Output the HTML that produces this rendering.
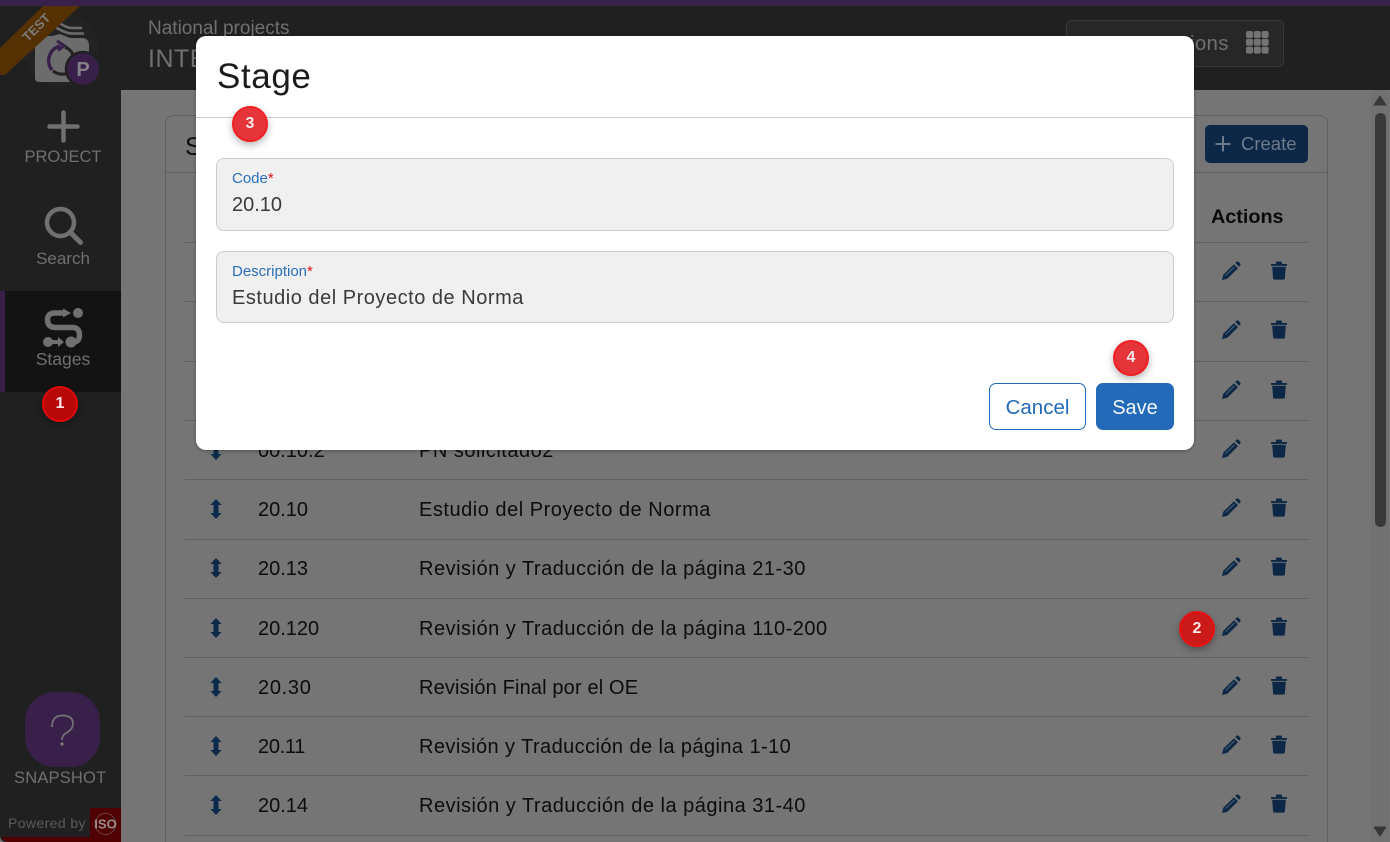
<!DOCTYPE html>
<html><head><meta charset="utf-8">
<style>
html,body{margin:0;padding:0;width:1390px;height:842px;overflow:hidden;background:#757575;font-family:"Liberation Sans",sans-serif}
#w{position:relative;width:1390px;height:842px;overflow:hidden;background:#757575}
.a{position:absolute}
.t{position:absolute;white-space:nowrap;line-height:24px;height:24px}
.line{position:absolute;left:185px;width:1123px;height:1px;background:#5f5f5f}
.c{color:#0c0c0c;font-size:20px;left:258px}
.d{color:#0c0c0c;font-size:20px;left:419px;letter-spacing:.5px}
.side{color:#707070;text-align:center;left:0;width:126px}
.b{position:absolute;width:32px;height:32px;border-radius:50%;border:2.5px solid #f01f22;background:#e5343a;color:#fbe9e9;font-weight:700;font-size:16px;line-height:32px;text-align:center;box-shadow:0 3px 8px rgba(0,0,0,.3)}
</style></head>
<body>
<div id="w">
<svg width="0" height="0" style="position:absolute"><defs>
<g id="pen"><path d="M1 19l1.300-5.200L13 3.200l4 4L6.200 17.900z" fill="#0c2846"/><path d="M4.500 14.700L13.500 5.800" stroke="#566578" stroke-width="1" fill="none"/><path d="M14.300 1.900l1-1c.8-.7 1.600-.7 2.300 0l1.500 1.500c.7.7.7 1.500 0 2.300l-1 1z" fill="#0c2846"/></g>
<g id="tr"><path d="M0 3h16v1.900H0z M5 3V1.500Q5 .5 6 .5h4q1 0 1 1V3z" fill="#0c2846"/><path d="M1.200 5.800h13.600l-.9 11.600q-.1 1.200-1.300 1.200H3.400q-1.200 0-1.300-1.200z" fill="#0c2846"/></g>
<g id="ar"><path d="M6 0l5.600 6H8.500v8h3.100L6 20 .4 14h3.100V6H.4z" fill="#0c2a4a"/></g>
</defs></svg>

<!-- page chrome -->
<div class="a" style="left:0;top:0;width:1390px;height:6px;background:#38204a"></div>
<div class="a" style="left:0;top:6px;width:1390px;height:84px;background:#202020"></div>
<div class="a" style="left:0;top:6px;width:121px;height:836px;background:#202020;border-bottom-left-radius:6px"></div>
<div class="a" style="left:0;top:291px;width:121px;height:101px;background:#131313"></div>
<div class="a" style="left:0;top:291px;width:5px;height:101px;background:#38204a"></div>

<!-- header -->
<div class="t" style="left:148px;top:17px;font-size:19px;color:#707070">National projects</div>
<div class="t" style="left:148px;top:47px;font-size:25px;color:#707070;letter-spacing:.5px">INTE</div>
<div class="a" style="left:1066px;top:20px;width:216px;height:45px;border:1px solid #383838;border-radius:5px;background:#272727"></div>
<div class="t" style="left:1190px;top:32px;font-size:20.500px;color:#707070;letter-spacing:.3px">ions</div>
<svg class="a" style="left:1246px;top:31px" width="23" height="23"><g fill="#747474"><rect x="0" y="0" width="7" height="7" rx="2"/><rect x="7.800" y="0" width="7" height="7" rx="2"/><rect x="15.600" y="0" width="7" height="7" rx="2"/><rect x="0" y="7.800" width="7" height="7" rx="2"/><rect x="7.800" y="7.800" width="7" height="7" rx="2"/><rect x="15.600" y="7.800" width="7" height="7" rx="2"/><rect x="0" y="15.600" width="7" height="7" rx="2"/><rect x="7.800" y="15.600" width="7" height="7" rx="2"/><rect x="15.600" y="15.600" width="7" height="7" rx="2"/></g></svg>

<!-- logo -->
<svg class="a" style="left:0;top:0" width="121" height="90">
<circle cx="62" cy="50" r="37" fill="#232323"/>
<path d="M35 44Q35 36 42 36H52L60 34 70 38H82Q89 38 89 46V78Q89 82 85 82H39Q35 82 35 78z" fill="#6c6c6c"/>
<path d="M58 22Q66 28 72 28H82M56 27.500Q66 33.500 72 33.500H84" fill="none" stroke="#6c6c6c" stroke-width="2.500"/>
<path d="M52 70A15 15 0 0 1 60 46" fill="none" stroke="#38204a" stroke-width="3.400"/>
<path d="M57 41l7 4.500-6 5" fill="none" stroke="#38204a" stroke-width="3"/>
<path d="M65 47A15 15 0 0 1 74 58M70 72A15 15 0 0 1 53 71" fill="none" stroke="#232323" stroke-width="3.200"/>
<circle cx="83" cy="69" r="17" fill="#38204a" stroke="#202020" stroke-width="2.500"/>
<text x="83" y="76" font-family="Liberation Sans" font-size="20" font-weight="700" fill="#84808a" text-anchor="middle">P</text>
<path d="M43 6H80L5 75H0V48z" fill="#543003"/>
<path d="M80 0L74 6H43L49 0z" fill="#38204a"/>
<text x="36" y="32" font-family="Liberation Sans" font-size="13" font-weight="700" fill="#7c7c7c" text-anchor="middle" transform="rotate(-45 36 27)">TEST</text>
</svg>

<!-- sidebar items -->
<svg class="a" style="left:47px;top:110px" width="33" height="33"><path d="M16.500 2.500v28M2.500 16.500h28" stroke="#707070" stroke-width="4.500" stroke-linecap="round"/></svg>
<div class="t side" style="top:145px;font-size:16.500px">PROJECT</div>
<svg class="a" style="left:42px;top:205px" width="44" height="44"><circle cx="18.500" cy="17.500" r="13.500" fill="none" stroke="#707070" stroke-width="4.500"/><path d="M28 27l10.500 10.500" stroke="#707070" stroke-width="5" stroke-linecap="round"/></svg>
<div class="t side" style="top:247px;font-size:17px">Search</div>
<svg class="a" style="left:42px;top:306px" width="44" height="44">
<path d="M24 7H13Q5.500 7 5.500 14T13 21.500H30Q37.500 21.500 37.500 29T30 36" fill="none" stroke="#707070" stroke-width="5.500"/>
<path d="M21 2.500l8 4.500-8 4.500z" fill="#707070"/>
<circle cx="36" cy="7" r="5" fill="#707070"/>
<circle cx="29" cy="36" r="5.500" fill="#707070"/>
<circle cx="6" cy="36" r="5" fill="#707070"/>
<path d="M10 34h6v-3l6 5-6 5v-3h-6z" fill="#707070"/>
</svg>
<div class="t side" style="top:347px;font-size:17.500px">Stages</div>

<div class="a" style="left:25px;top:692px;width:75px;height:75px;border-radius:30px;background:#38204a"></div>
<svg class="a" style="left:0;top:700px" width="121" height="60"><path d="M52 27Q52 15.500 62.500 15.500Q73 15.500 73 24Q73 29 67 32.500Q62 35 62 40" fill="none" stroke="#747474" stroke-width="1.700"/><circle cx="62" cy="44" r="1.700" fill="#747474"/></svg>
<div class="t" style="left:14px;top:766px;font-size:16.500px;color:#707070;letter-spacing:.2px">SNAPSHOT</div>
<div class="a" style="left:2px;top:837px;width:119px;height:5px;background:#500000;border-bottom-left-radius:6px"></div>
<div class="a" style="left:90px;top:808px;width:31px;height:34px;background:#500000"></div>
<div class="t" style="left:8px;top:811px;font-size:14px;color:#5a5a5a;letter-spacing:.4px">Powered by</div>
<svg class="a" style="left:90px;top:808px" width="31" height="33"><circle cx="15.500" cy="16" r="10.500" fill="none" stroke="#705a5a" stroke-width=".7"/><text x="15.500" y="20.500" font-family="Liberation Sans" font-size="13" font-weight="700" fill="#988c8c" text-anchor="middle">ISO</text></svg>

<!-- card -->
<div class="a" style="left:165px;top:115px;width:1161px;height:740px;border:1px solid #5f5f5f;border-radius:8px"></div>
<div class="a" style="left:165px;top:172px;width:1162px;height:1px;background:#5f5f5f"></div>
<div class="t" style="left:185px;top:135px;font-size:25px;color:#0c0c0c">S</div>
<div class="a" style="left:1205px;top:125px;width:103px;height:38px;border-radius:5px;background:#0c2846"></div>
<svg class="a" style="left:1215px;top:136px" width="18" height="16"><path d="M8 0v15.500M.5 8h15" stroke="#6e7b8c" stroke-width="2"/></svg>
<div class="t" style="left:1241px;top:132px;font-size:18.500px;color:#6e7b8c">Create</div>
<div class="t" style="left:1211px;top:205px;font-size:19.800px;font-weight:700;color:#0a0a0a">Actions</div>

<!-- rows -->
<div class="line" style="top:242px"></div>
<div class="line" style="top:301px"></div>
<div class="line" style="top:361px"></div>
<div class="line" style="top:420px"></div>
<div class="line" style="top:479px"></div>
<div class="line" style="top:539px"></div>
<div class="line" style="top:598px"></div>
<div class="line" style="top:657px"></div>
<div class="line" style="top:716px"></div>
<div class="line" style="top:775px"></div>
<div class="line" style="top:835px"></div>

<div class="t c" style="top:439px">00.10.2</div><div class="t d" style="top:439px">PN solicitado2</div>
<div class="t c" style="top:498px">20.10</div><div class="t d" style="top:498px;letter-spacing:.52px">Estudio del Proyecto de Norma</div>
<div class="t c" style="top:557px">20.13</div><div class="t d" style="top:557px">Revisión y Traducción de la página 21-30</div>
<div class="t c" style="top:617px">20.120</div><div class="t d" style="top:617px">Revisión y Traducción de la página 110-200</div>
<div class="t c" style="top:676px;letter-spacing:.7px">20.30</div><div class="t d" style="top:676px;letter-spacing:.15px">Revisión Final por el OE</div>
<div class="t c" style="top:735px;letter-spacing:-.3px">20.11</div><div class="t d" style="top:735px;letter-spacing:.42px">Revisión y Traducción de la página 1-10</div>
<div class="t c" style="top:794px">20.14</div><div class="t d" style="top:794px">Revisión y Traducción de la página 31-40</div>

<svg class="a" style="left:0;top:0" width="1390" height="842">
<use href="#ar" x="210" y="440"/><use href="#ar" x="210" y="499"/><use href="#ar" x="210" y="558"/><use href="#ar" x="210" y="618"/><use href="#ar" x="210" y="677"/><use href="#ar" x="210" y="736"/><use href="#ar" x="210" y="795"/>
<use href="#pen" x="1221" y="261"/><use href="#tr" x="1271" y="261"/>
<use href="#pen" x="1221" y="320"/><use href="#tr" x="1271" y="320"/>
<use href="#pen" x="1221" y="380"/><use href="#tr" x="1271" y="380"/>
<use href="#pen" x="1221" y="439"/><use href="#tr" x="1271" y="439"/>
<use href="#pen" x="1221" y="498"/><use href="#tr" x="1271" y="498"/>
<use href="#pen" x="1221" y="557"/><use href="#tr" x="1271" y="557"/>
<use href="#pen" x="1221" y="617"/><use href="#tr" x="1271" y="617"/>
<use href="#pen" x="1221" y="676"/><use href="#tr" x="1271" y="676"/>
<use href="#pen" x="1221" y="735"/><use href="#tr" x="1271" y="735"/>
<use href="#pen" x="1221" y="794"/><use href="#tr" x="1271" y="794"/>
</svg>

<!-- scrollbar -->
<div class="a" style="left:1371px;top:90px;width:18px;height:752px;background:#717171"></div>
<div class="a" style="left:1375px;top:113px;width:11px;height:414px;border-radius:6px;background:#383838"></div>
<svg class="a" style="left:1372px;top:94px" width="16" height="12"><path d="M8 2L14 11H2z" fill="#383838" stroke="#383838" stroke-linejoin="round"/></svg>
<svg class="a" style="left:1372px;top:826px" width="16" height="12"><path d="M8 10L14 1H2z" fill="#383838" stroke="#383838" stroke-linejoin="round"/></svg>

<!-- modal -->
<div class="a" style="left:196px;top:36px;width:998px;height:414px;background:#fff;border-radius:10px;box-shadow:0 1px 3px rgba(0,0,0,.3)"></div>
<div class="a" style="left:196px;top:117px;width:998px;height:1px;background:#ccc"></div>
<div class="t" style="left:217px;top:58px;font-size:35px;line-height:38px;height:38px;color:#1c1c1c;letter-spacing:.6px">Stage</div>

<div class="a" style="left:216px;top:158px;width:956px;height:71px;background:#f0f0f0;border:1px solid #ccc;border-radius:8px"></div>
<div class="t" style="left:232px;top:167px;font-size:15px;color:#2a6ebb">Code<span style="color:#e01515">*</span></div>
<div class="t" style="left:232px;top:193px;font-size:20px;color:#3a3a3a">20.10</div>
<div class="a" style="left:216px;top:251px;width:956px;height:70px;background:#f0f0f0;border:1px solid #ccc;border-radius:8px"></div>
<div class="t" style="left:232px;top:260px;font-size:15px;color:#2a6ebb">Description<span style="color:#e01515">*</span></div>
<div class="t" style="left:232px;top:286px;font-size:20px;color:#3a3a3a;letter-spacing:.52px">Estudio del Proyecto de Norma</div>

<div class="a" style="left:989px;top:383px;width:95px;height:45px;border:1px solid #236ab9;border-radius:7px;background:#fff;color:#236ab9;font-size:20.500px;line-height:48px;text-align:center">Cancel</div>
<div class="a" style="left:1096px;top:383px;width:78px;height:47px;border-radius:7px;background:#236ab9;color:#f2f6fb;font-size:20px;line-height:50px;text-align:center">Save</div>

<!-- badges -->
<div class="b" style="left:42px;top:386px;background:#b80808;border-color:#e40a0a">1</div>
<div class="b" style="left:1179px;top:611px;background:#cb1a1a;border-color:#ea1010">2</div>
<div class="b" style="left:232px;top:106px">3</div>
<div class="b" style="left:1113px;top:340px">4</div>
</div>
</body></html>
